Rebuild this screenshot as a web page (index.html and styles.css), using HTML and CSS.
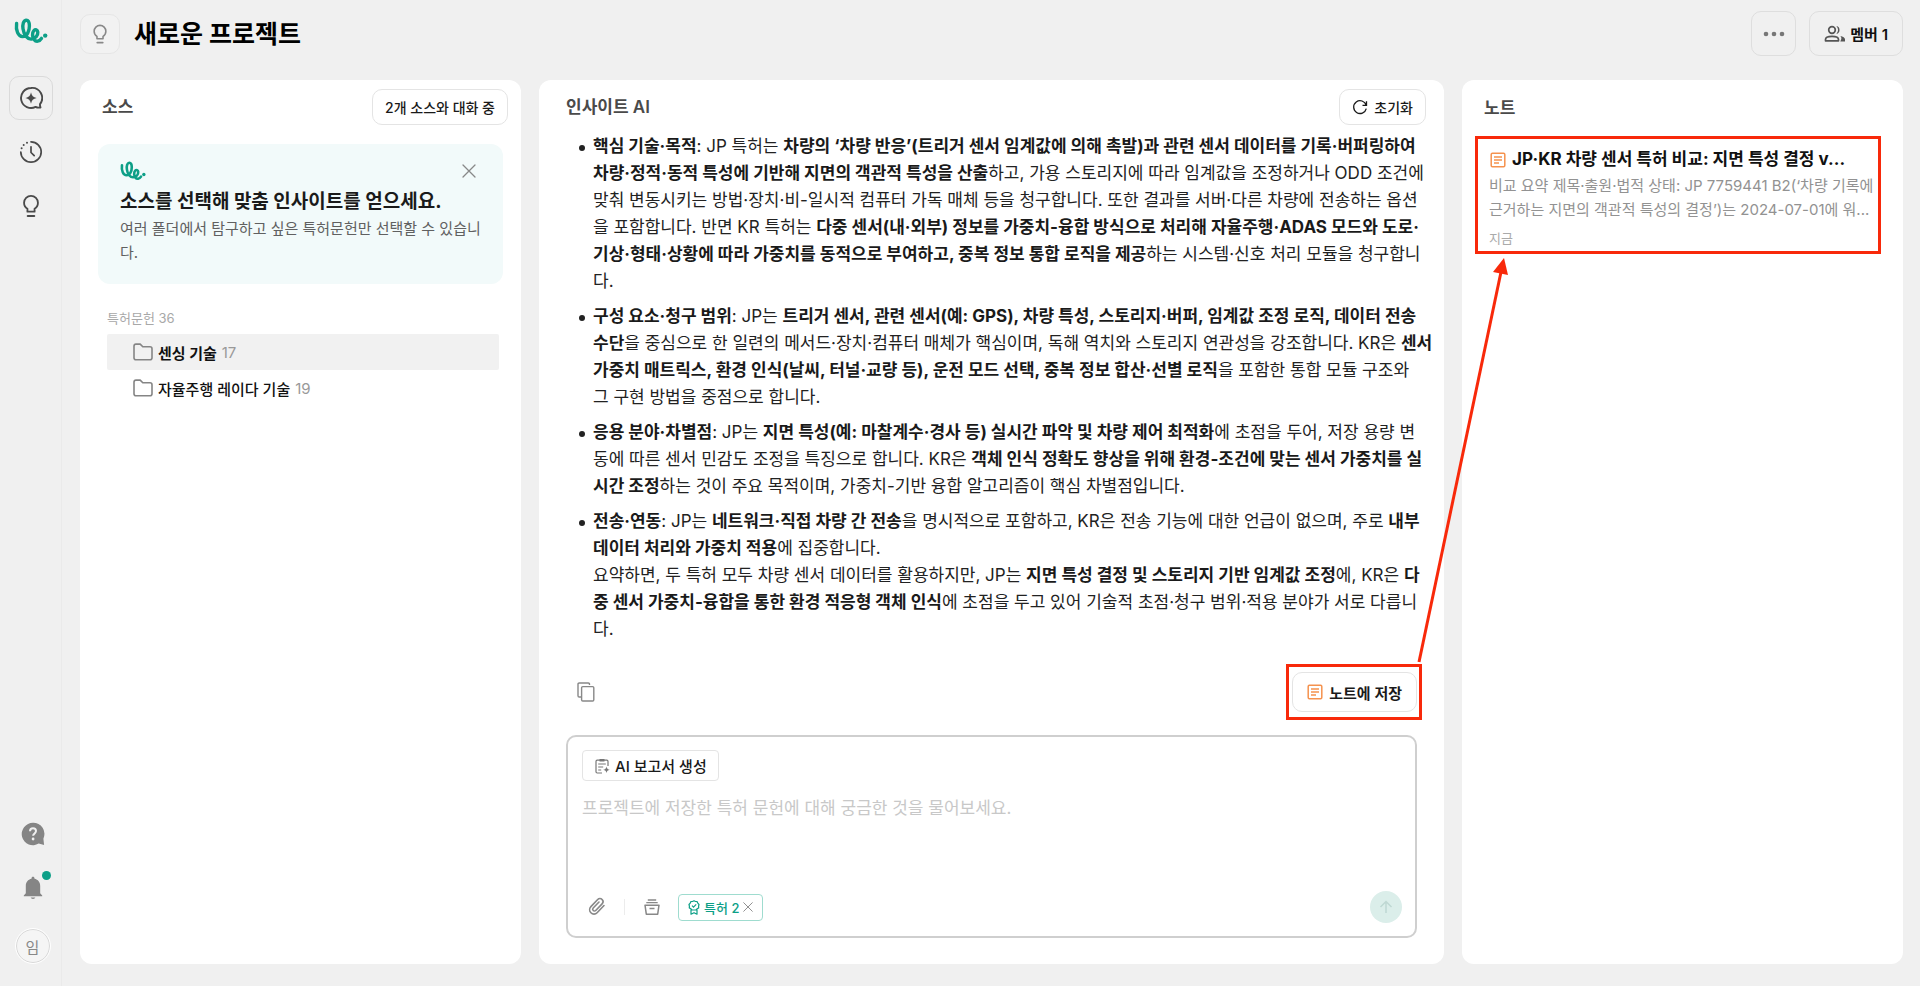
FILE: index.html
```html
<!DOCTYPE html>
<html lang="ko">
<head>
<meta charset="utf-8">
<meta name="viewport" content="width=device-width, initial-scale=1">
<title>새로운 프로젝트</title>
<link rel="stylesheet" href="styles.css">
</head>
<body>
<svg class="defs" aria-hidden="true">
  <symbol id="logo" viewBox="0 0 34 26">
    <path d="M2.6 5.4C1.6 12.5 4.2 18.6 8.6 18.6c4.6 0 6.8-5.6 6.8-10.6C15.4 3.8 14 2 12 2.2c-2.6.3-3.6 4.4-3 8.6.9 6.300 4.400 10.600 8.400 10.300 4.200-.3 6.600-3.800 6.400-6.900-.2-2.600-2.400-3.200-3.900-1.600-2.100 2.300-1.600 6.600.2 9 1.900 2.400 5.400 2.100 7.400-1.200" fill="none" stroke="currentColor" stroke-width="3.400" stroke-linecap="round" stroke-linejoin="round"/>
    <circle cx="31.200" cy="17.600" r="2.200" fill="currentColor"/>
  </symbol>
  <symbol id="bulb" viewBox="0 0 24 24">
    <path d="M8.700 17.200h6.600v-2.600c1.800-1.100 3.100-3 3.100-5.600a6.400 6.400 0 0 0-12.800 0c0 2.600 1.300 4.500 3.100 5.600z" fill="none" stroke="currentColor" stroke-width="1.700" stroke-linejoin="round"/>
    <path d="M9 21.300h6" stroke="currentColor" stroke-width="1.900" stroke-linecap="round"/>
  </symbol>
  <symbol id="note" viewBox="0 0 16 16">
    <rect x="1.200" y="1.200" width="13.600" height="13.600" rx="1.200" fill="none" stroke="currentColor" stroke-width="1.500"/>
    <path d="M4 5h8M4 8h8M4 11h5" stroke="currentColor" stroke-width="1.400"/>
  </symbol>
  <symbol id="cross" viewBox="0 0 14 14">
    <path d="M1 1l12 12M13 1L1 13" fill="none" stroke="currentColor" stroke-width="1.300" stroke-linecap="round"/>
  </symbol>
  <symbol id="folder" viewBox="0 0 20 18">
    <path d="M1 3.200C1 2 1.900 1.100 3 1.100h4.200l2.600 2.700H17c1.100 0 2 .9 2 2v9c0 1.100-.9 2-2 2H3c-1.100 0-2-.9-2-2z" fill="none" stroke="currentColor" stroke-width="1.600" stroke-linejoin="round"/>
  </symbol>
</svg>

<div class="app">
  <nav class="rail" aria-label="주 메뉴">
    <a class="rail-logo" href="#" aria-label="홈"><svg width="34" height="26"><use href="#logo"/></svg></a>
    <button class="rail-btn active" type="button" aria-label="새 대화">
      <svg width="24" height="24" viewBox="0 0 24 24"><path d="M12 2a10 10 0 1 0 4.600 18.900c1.300.7 3 .9 4.900.6-.4-.9-.6-2-.5-3.400A10 10 0 0 0 12 2z" fill="none" stroke="currentColor" stroke-width="1.900" stroke-linejoin="round"/><path d="M12 6.300c.7 3.500 2.200 5 5.700 5.700-3.500.7-5 2.200-5.700 5.700-.7-3.500-2.200-5-5.700-5.700 3.500-.7 5-2.200 5.700-5.700z" fill="currentColor"/></svg>
    </button>
    <button class="rail-btn" type="button" aria-label="기록">
      <svg width="24" height="24" viewBox="0 0 24 24"><path d="M12 1.800a10.200 10.200 0 1 1-10.200 10.200M12 6.800V12.500l3.200 3.200" fill="none" stroke="currentColor" stroke-width="1.700" stroke-linecap="round" stroke-linejoin="round"/><g fill="currentColor"><circle cx="8" cy="2.800" r="1"/><circle cx="4.700" cy="5" r="1"/><circle cx="2.600" cy="8.200" r="1"/></g></svg>
    </button>
    <button class="rail-btn" type="button" aria-label="아이디어"><svg width="26" height="26"><use href="#bulb"/></svg></button>
    <div class="rail-foot">
      <button class="rail-btn soft" type="button" aria-label="도움말">
        <svg width="24" height="24" viewBox="0 0 24 24"><path d="M12 .8a11.200 11.200 0 1 0 5.700 20.800l5.400 1.300-.7-6.200A11.200 11.200 0 0 0 12 .8z" fill="currentColor"/><path d="M9 9.300c0-1.800 1.200-3 3-3s3 1.100 3 2.800c0 2.200-2.900 2.400-2.900 4.700" fill="none" stroke="#f0f0f0" stroke-width="2"/><circle cx="12.100" cy="17" r="1.400" fill="#f0f0f0"/></svg>
      </button>
      <button class="rail-btn soft" type="button" aria-label="알림">
        <svg width="20" height="24" viewBox="0 0 20 24"><path d="M10 .8c-.9 0-1.500.6-1.500 1.500v.5C5 3.500 2.800 6.300 2.800 10v7.200L.8 19.400v.8h18.400v-.8l-2-2.200V10c0-3.700-2.200-6.500-5.700-7.200v-.5c0-.9-.6-1.500-1.500-1.500zM7.600 21.600a2.500 1.900 0 0 0 4.800 0z" fill="currentColor"/></svg>
        <span class="dot"></span>
      </button>
      <button class="avatar" type="button">임</button>
    </div>
  </nav>

  <div class="page">
    <header class="top">
      <button class="title-icon" type="button" aria-label="프로젝트 아이콘"><svg width="22" height="22"><use href="#bulb"/></svg></button>
      <h1>새로운 프로젝트</h1>
      <button class="top-btn more" type="button" aria-label="더보기"><svg width="22" height="6" viewBox="0 0 22 6"><g fill="currentColor"><circle cx="3" cy="3" r="2.300"/><circle cx="11" cy="3" r="2.300"/><circle cx="19" cy="3" r="2.300"/></g></svg></button>
      <button class="top-btn" type="button">
        <svg width="22" height="18" viewBox="0 0 22 18"><g fill="none" stroke="currentColor" stroke-width="1.700"><circle cx="8" cy="5" r="3.300"/><path d="M1.500 15.800v-1.200c0-2 3-3.200 6.500-3.200s6.500 1.200 6.500 3.200v1.200z" stroke-linejoin="round"/></g><path d="M12.400 1.100a4 4 0 0 1 0 7.800 6 6 0 0 0 0-7.800zM16.300 16.600H21v-2.300c0-1.700-2-2.900-4.700-3.400 1 .9 1.200 2.200 1 3z" fill="currentColor"/></svg>
        <span>멤버 1</span>
      </button>
    </header>

    <main class="columns">
      <section class="card sources">
        <div class="card-head">
          <h2>소스</h2>
          <button class="pill" type="button">2개 소스와 대화 중</button>
        </div>
        <div class="tip">
          <div class="tip-top">
            <svg class="brand" width="26" height="20"><use href="#logo"/></svg>
            <button class="bare close" type="button" aria-label="닫기"><svg width="14" height="14"><use href="#cross"/></svg></button>
          </div>
          <h3>소스를 선택해 맞춤 인사이트를 얻으세요.</h3>
          <p>여러 폴더에서 탐구하고 싶은 특허문헌만 선택할 수 있습니<br>다.</p>
        </div>
        <div class="tree">
          <div class="tree-label">특허문헌 36</div>
          <a class="folder selected" href="#"><svg width="20" height="18"><use href="#folder"/></svg><span>센싱 기술</span><em>17</em></a>
          <a class="folder" href="#"><svg width="20" height="18"><use href="#folder"/></svg><span>자율주행 레이다 기술</span><em>19</em></a>
        </div>
      </section>

      <section class="card chat">
        <div class="card-head">
          <h2>인사이트 AI</h2>
          <button class="pill" type="button"><svg width="16" height="16" viewBox="0 0 16 16"><path d="M14.200 6.200A6.400 6.400 0 1 0 14.300 9.600M14.500 2.300v4h-4" fill="none" stroke="currentColor" stroke-width="1.300"/></svg><span>초기화</span></button>
        </div>
        <ul class="answer">
          <li><b>핵심 기술·목적</b>: JP 특허는 <b>차량의 ‘차량 반응’(트리거 센서 임계값에 의해 촉발)과 관련 센서 데이터를 기록·버퍼링하여<br>차량·정적·동적 특성에 기반해 지면의 객관적 특성을 산출</b>하고, 가용 스토리지에 따라 임계값을 조정하거나 ODD 조건에<br>맞춰 변동시키는 방법·장치·비-일시적 컴퓨터 가독 매체 등을 청구합니다. 또한 결과를 서버·다른 차량에 전송하는 옵션<br>을 포함합니다. 반면 KR 특허는 <b>다중 센서(내·외부) 정보를 가중치-융합 방식으로 처리해 자율주행·ADAS 모드와 도로·<br>기상·형태·상황에 따라 가중치를 동적으로 부여하고, 중복 정보 통합 로직을 제공</b>하는 시스템·신호 처리 모듈을 청구합니<br>다.</li>
          <li><b>구성 요소·청구 범위</b>: JP는 <b>트리거 센서, 관련 센서(예: GPS), 차량 특성, 스토리지·버퍼, 임계값 조정 로직, 데이터 전송<br>수단</b>을 중심으로 한 일련의 메서드·장치·컴퓨터 매체가 핵심이며, 독해 역치와 스토리지 연관성을 강조합니다. KR은 <b>센서<br>가중치 매트릭스, 환경 인식(날씨, 터널·교량 등), 운전 모드 선택, 중복 정보 합산·선별 로직</b>을 포함한 통합 모듈 구조와<br>그 구현 방법을 중점으로 합니다.</li>
          <li><b>응용 분야·차별점</b>: JP는 <b>지면 특성(예: 마찰계수·경사 등) 실시간 파악 및 차량 제어 최적화</b>에 초점을 두어, 저장 용량 변<br>동에 따른 센서 민감도 조정을 특징으로 합니다. KR은 <b>객체 인식 정확도 향상을 위해 환경-조건에 맞는 센서 가중치를 실<br>시간 조정</b>하는 것이 주요 목적이며, 가중치-기반 융합 알고리즘이 핵심 차별점입니다.</li>
          <li><b>전송·연동</b>: JP는 <b>네트워크·직접 차량 간 전송</b>을 명시적으로 포함하고, KR은 전송 기능에 대한 언급이 없으며, 주로 <b>내부<br>데이터 처리와 가중치 적용</b>에 집중합니다.<br>요약하면, 두 특허 모두 차량 센서 데이터를 활용하지만, JP는 <b>지면 특성 결정 및 스토리지 기반 임계값 조정</b>에, KR은 <b>다<br>중 센서 가중치-융합을 통한 환경 적응형 객체 인식</b>에 초점을 두고 있어 기술적 초점·청구 범위·적용 분야가 서로 다릅니<br>다.</li>
        </ul>
        <div class="answer-tools">
          <button class="bare" type="button" aria-label="복사"><svg width="18" height="20" viewBox="0 0 18 20"><path d="M12.500 3V2.200c0-.7-.5-1.200-1.200-1.200H2.200C1.500 1 1 1.500 1 2.200v11.600c0 .7.500 1.200 1.200 1.200H4" fill="none" stroke="currentColor" stroke-width="1.400"/><rect x="4.600" y="4.600" width="12.200" height="14.400" rx="1.200" fill="none" stroke="currentColor" stroke-width="1.400"/></svg></button>
          <div class="marked save-mark">
            <button class="save" type="button"><svg class="orange" width="16" height="16"><use href="#note"/></svg><span>노트에 저장</span></button>
          </div>
        </div>
        <form class="composer">
          <button class="report" type="button">
            <svg width="16" height="16" viewBox="0 0 16 16"><g fill="none" stroke="currentColor" stroke-width="1.200"><path d="M8 15H3.200C2.500 15 2 14.500 2 13.800V3.400c0-.7.500-1.200 1.200-1.200h9.600c.7 0 1.200.5 1.200 1.200V8"/><path d="M4.200 6h7.600M4.200 9h5M4.200 12h3"/></g><path d="M5.500 1h5v2.600h-5zM12.500 8.500c.4 2.100 1.200 2.900 3.300 3.300-2.100.4-2.900 1.200-3.300 3.300-.4-2.100-1.200-2.900-3.300-3.300 2.100-.4 2.900-1.200 3.300-3.300z" fill="currentColor"/></svg>
            <span>AI 보고서 생성</span>
          </button>
          <textarea aria-label="질문 입력" placeholder="프로젝트에 저장한 특허 문헌에 대해 궁금한 것을 물어보세요."></textarea>
          <div class="composer-bar">
            <button class="bare" type="button" aria-label="파일 첨부"><svg width="20" height="20" viewBox="0 0 20 20"><path d="M17 8.500l-6.900 7.300a4.300 4.300 0 0 1-6.200 0 4.500 4.500 0 0 1 0-6.200l6.800-7.100a3 3 0 0 1 4.400 0 3.200 3.200 0 0 1 0 4.400L8.700 13.500a1.700 1.700 0 0 1-2.500 0 1.800 1.800 0 0 1 0-2.500l5.800-6" fill="none" stroke="currentColor" stroke-width="1.600" stroke-linecap="round"/></svg></button>
            <span class="bar-line"></span>
            <button class="bare" type="button" aria-label="보관함"><svg width="16" height="16" viewBox="0 0 16 16"><path d="M1 6.200h14l-1.300 9H2.300zM5.500 9.600h5" fill="none" stroke="currentColor" stroke-width="1.500" stroke-linejoin="round"/><path d="M2.300 3.600h11.400M3.800 1h8.400" stroke="currentColor" stroke-width="1.400"/></svg></button>
            <span class="chip">
              <svg width="12" height="15" viewBox="0 0 12 15"><path d="M6 .8l1.500.7 1.700.1.600 1.600 1.200 1.300L10.600 6.200l.1 1.700-1.500.8L8 10H4L2.800 8.700 1.300 7.900l.1-1.700L1 4.500l1.200-1.300.6-1.600 1.700-.1zM3 9.500v4.700l3-1.500 3 1.500V9.500" fill="none" stroke="currentColor" stroke-width="1.200" stroke-linejoin="round"/><path d="M4 5.600l1.500 1.500L8.200 4.400" fill="none" stroke="currentColor" stroke-width="1.200"/></svg>
              <span>특허 2</span>
              <button class="bare chip-x" type="button" aria-label="특허 제거"><svg width="10" height="10"><use href="#cross"/></svg></button>
            </span>
            <button class="send" type="submit" aria-label="보내기"><svg width="14" height="14" viewBox="0 0 14 14"><path d="M7 13V1.500M1.500 7L7 1.500 12.500 7" fill="none" stroke="currentColor" stroke-width="1.500"/></svg></button>
          </div>
        </form>
      </section>

      <section class="card notes">
        <div class="card-head"><h2>노트</h2></div>
        <article class="marked note">
          <h3><svg class="orange" width="16" height="16"><use href="#note"/></svg><span>JP·KR 차량 센서 특허 비교: 지면 특성 결정 v...</span></h3>
          <p>비교 요약 제목·출원·법적 상태: JP 7759441 B2(‘차량 기록에<br>근거하는 지면의 객관적 특성의 결정’)는 2024-07-01에 워...</p>
          <time>지금</time>
        </article>
      </section>
    </main>
  </div>
  <svg class="arrow" width="120" height="410" viewBox="0 0 120 410" aria-hidden="true">
    <path d="M19 404L101 14" stroke="#f8290a" stroke-width="3"/>
    <path d="M104 0L93 14l15 3z" fill="#f8290a"/>
  </svg>
</div>
</body>
</html>
```
FILE: styles.css
```css
* { box-sizing: border-box; }
body {
  margin: 0;
  background: #f0f0f0;
  color: #1a1a1a;
  font-family: Inter, "Noto Sans CJK KR", sans-serif;
  font-size: 15px;
}
h1, h2, h3, p, ul { margin: 0; padding: 0; }
button, textarea { font: inherit; color: inherit; }
button {
  display: flex;
  align-items: center;
  justify-content: center;
  padding: 0;
  background: none;
  border: 0;
  cursor: pointer;
}
a { color: inherit; text-decoration: none; }
svg { display: block; flex: none; }
.defs { position: absolute; width: 0; height: 0; }

.app { position: relative; display: flex; min-height: 100vh; }

.rail {
  width: 62px;
  flex: none;
  display: flex;
  flex-direction: column;
  align-items: center;
  gap: 10px;
  padding: 18px 0 23px;
  border-right: 1px solid #eaeaea;
  color: #4a4a4a;
}
.rail-logo { color: #0d9f87; height: 48px; }
.rail-btn { position: relative; width: 44px; height: 44px; border-radius: 10px; }
.rail-btn.active { border: 1px solid #dadada; }
.rail-foot {
  display: flex;
  flex-direction: column;
  align-items: center;
  gap: 10px;
  margin-top: auto;
  padding-left: 4px;
}
.soft { color: #858585; }
.dot {
  position: absolute;
  top: 5px;
  right: 4px;
  width: 9px;
  height: 9px;
  border-radius: 50%;
  background: #0d9f87;
}
.avatar {
  width: 34px;
  height: 34px;
  margin-top: 9px;
  border: 1px solid #d8d8d8;
  border-radius: 50%;
  background: #f5f5f5;
  outline: 1px solid #fff;
  color: #888;
}

.page { flex: 1; min-width: 0; display: flex; flex-direction: column; padding: 0 17px 22px 18px; }
.top { display: flex; align-items: center; height: 80px; padding-bottom: 13px; }
.title-icon {
  width: 40px;
  height: 40px;
  border: 1px solid #e6e6e6;
  border-radius: 10px;
  background: #f2f2f2;
  color: #888;
}
h1 { margin-left: 14px; font-size: 25px; line-height: 36px; color: #000; }
.top-btn {
  height: 45px;
  gap: 4px;
  padding: 0 14px;
  border: 1px solid #dedede;
  border-radius: 10px;
  color: #555;
  font-weight: 600;
}
.top-btn span { color: #111; }
.top-btn.more { width: 45px; padding: 0; margin: 0 13px 0 auto; color: #777; }

.columns { flex: 1; display: grid; grid-template-columns: 441fr 905fr 441fr; gap: 18px; }
.card { min-width: 0; background: #fff; border-radius: 12px; display: flex; flex-direction: column; }
.card-head { display: flex; align-items: center; justify-content: space-between; }
h2 { font-size: 17px; line-height: 24px; color: #4a4a4a; font-weight: 600; }
.pill {
  height: 36px;
  gap: 6px;
  padding: 0 12px;
  border: 1px solid #e4e4e4;
  border-radius: 10px;
  background: #fff;
  font-size: 14px;
  font-weight: 500;
}

.sources .card-head { padding: 9px 13px 0 22px; }
.tip {
  margin: 19px 18px 0;
  padding: 17px 22px;
  border-radius: 12px;
  background: #f2fafa;
}
.tip-top { display: flex; justify-content: space-between; align-items: center; height: 20px; }
.brand { color: #0d9f87; }
.tip h3 { margin-top: 8px; font-size: 19px; line-height: 26px; white-space: nowrap; }
.tip p { margin-top: 2px; padding-bottom: 2px; line-height: 24px; color: #606060; white-space: nowrap; }
.bare { color: #888; }
.close { padding: 5px; }
.tree { padding: 24px 22px 0 27px; }
.tree-label { font-size: 13px; line-height: 20px; color: #a8a8a8; }
.folder {
  display: flex;
  align-items: center;
  gap: 5px;
  height: 36px;
  padding-left: 26px;
  font-weight: 500;
  color: #111;
}
.tree-label + .folder { margin-top: 6px; }
.folder svg { color: #858585; }
.folder em { font-style: normal; font-weight: 400; color: #999; }
.folder.selected { background: #f1f1f1; border-radius: 2px; font-weight: 700; }

.chat .card-head { padding: 9px 18px 0 27px; }
.answer {
  margin: 8px 18px 0 54px;
  font-size: 17px;
  line-height: 27px;
  list-style: none;
  white-space: nowrap;
  color: #222;
}
.answer li { position: relative; }
.answer li::before {
  content: "";
  position: absolute;
  left: -14px;
  top: 12px;
  width: 6px;
  height: 6px;
  border-radius: 50%;
  background: #222;
}
.answer li + li { margin-top: 8px; }
.answer b { font-weight: 700; color: #1a1a1a; }
.answer-tools {
  display: flex;
  align-items: center;
  justify-content: space-between;
  margin-top: 21px;
  padding: 0 22px 0 38px;
}
.marked { border: 3px solid #f8290a; }
.save-mark { padding: 5px 2px 5px 3px; }
.save {
  height: 40px;
  gap: 6px;
  padding: 0 14px;
  border: 1px solid #e4e4e4;
  border-radius: 10px;
  font-weight: 600;
}
.orange { color: #f5924e; }
.composer {
  flex: 1;
  display: flex;
  flex-direction: column;
  align-items: flex-start;
  margin: 15px 27px 26px;
  padding: 13px 13px 13px 14px;
  border: 2px solid #cfcfcf;
  border-radius: 10px;
}
.report {
  height: 31px;
  gap: 5px;
  padding: 0 11px;
  border: 1px solid #e4e4e4;
  border-radius: 4px;
  font-weight: 500;
}
.report svg { color: #777; }
.composer textarea {
  flex: 1;
  width: 100%;
  margin-top: 14px;
  padding: 0;
  border: 0;
  outline: 0;
  resize: none;
  background: none;
  font-size: 17px;
  line-height: 26px;
}
.composer textarea::placeholder { color: #c8c8c8; }
.composer-bar { display: flex; align-items: center; width: 100%; padding-left: 5px; }
.bar-line { width: 1px; height: 16px; margin: 0 19px 0 17px; background: #ececec; }
.chip {
  display: flex;
  align-items: center;
  gap: 4px;
  height: 27px;
  margin-left: 18px;
  padding: 0 9px;
  border: 1px solid #9fdccf;
  border-radius: 4px;
  color: #0d9f87;
  font-size: 13px;
  font-weight: 500;
}
.send {
  width: 32px;
  height: 32px;
  margin-left: auto;
  border-radius: 50%;
  background: #dbeeea;
  color: #bfd8d3;
}

.notes .card-head { padding: 16px 22px 0; }
.note { margin: 16px 22px 0 13px; padding: 7px 6px 4px 11px; white-space: nowrap; }
.note h3 { display: flex; align-items: center; gap: 6px; padding-left: 1px; font-size: 17px; line-height: 27px; color: #111; }
.note p { color: #929292; line-height: 24px; margin-top: 1px; }
.note time { display: block; margin-top: 7px; font-size: 13px; line-height: 18px; color: #aaa; }

.arrow { position: absolute; left: 1400px; top: 258px; pointer-events: none; }
```
